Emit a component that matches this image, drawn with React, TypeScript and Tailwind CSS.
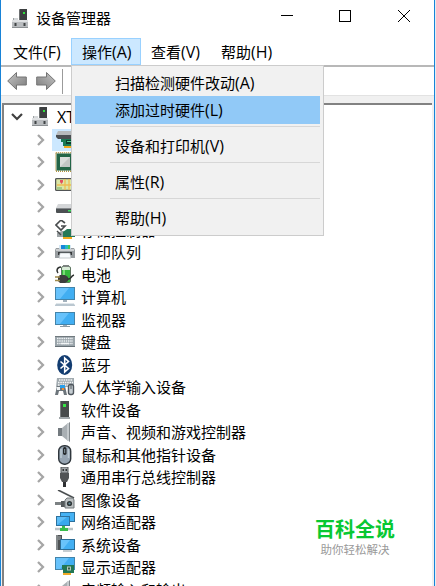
import React from "react";

const Chevron = () => (
  <svg width="10" height="14" viewBox="0 0 10 14" fill="none" stroke="#a6a6a6" strokeWidth="2.3">
    <path d="M2 2l5 5-5 5" />
  </svg>
);

const ComputerTower = () => (
  <svg width="20" height="20" viewBox="0 0 20 20">
    <path d="M8 1l1-1h7v12H8z" fill="#3c3f40" />
    <path d="M8 1l1-1v12H8z" fill="#6d7071" />
    <rect x="12" y="3" width="2" height="2" fill="#2fe23c" />
    <path d="M2 9h5v3H2z" fill="#d5d8da" />
    <path d="M2 9h1v3H2z" fill="#9da1a3" />
    <path d="M1 11h16v8H1z" fill="#b9bcbf" />
    <path d="M1 11h16v2H1z" fill="#dfe1e3" />
    <path d="M3.500 14h2v3h-2zM12.500 14h2v3h-2z" fill="#404446" />
    <path d="M1 18h16v1H1z" fill="#8c9093" />
  </svg>
);

const DiskController = () => (
  <svg width="20" height="20" viewBox="0 0 20 20">
    <path d="M3 1h17v4H1z" fill="#b7babc" />
    <path d="M1 5h19v4H3L1 7z" fill="#4b4f52" />
    <path d="M6 9h14v7H8v-4H6z" fill="#197a55" />
    <path d="M11 10h6v4h-6z" fill="#0b3d2b" />
    <path d="M12 11h4v1h-4z" fill="#54ce93" />
    <path d="M9 16h10v2H9z" fill="#f2a91c" />
  </svg>
);

const Processor = () => (
  <svg width="20" height="20" viewBox="0 0 20 20">
    <rect x="0.800" y="0.800" width="18.400" height="18.400" fill="none" stroke="#b39441" strokeWidth="1.400" strokeDasharray="1 1" />
    <rect x="1.500" y="1.500" width="17" height="17" fill="#236547" />
    <rect x="5" y="5" width="10" height="10" fill="#d9dcdb" />
    <path d="M15 5v10H5z" fill="#c1c6c4" />
  </svg>
);

const MapDevice = () => (
  <svg width="20" height="20" viewBox="0 0 20 20">
    <rect x="0.600" y="3.600" width="18.800" height="11.800" rx="1" fill="#dce7a5" stroke="#515455" strokeWidth="1.300" />
    <path d="M2 10h16M10 4v11M14 4v11" stroke="#eebc53" strokeWidth="1.300" />
    <path d="M2 12h5v3H2z" fill="#a5c98a" />
    <path d="M5 5h3v2L6.500 9 5 7z" fill="#e34f5f" />
  </svg>
);

const DiskDrive = () => (
  <svg width="20" height="20" viewBox="0 0 20 20">
    <path d="M3 7h14l2 4H1z" fill="#d4d6d8" />
    <rect x="1" y="11" width="18" height="5" rx="1" fill="#4c5053" />
    <path d="M1 11h18v1H1z" fill="#85898c" />
    <rect x="13" y="13" width="3" height="1.500" fill="#3bdf5c" />
  </svg>
);

const StorageController = () => (
  <svg width="20" height="20" viewBox="0 0 20 20">
    <path d="M2 13l5-2h13v6H2z" fill="#9ea4a6" />
    <path d="M8 12l4-3h8v8H8z" fill="#277958" />
    <path d="M8 17h9v2H8z" fill="#f2a91c" />
    <path d="M10 3L6 0 1 5l5 5 4-4H6" fill="#fff" stroke="#484b4d" strokeWidth="1.600" />
    <path d="M2 11l4 4" stroke="#484b4d" strokeWidth="1.500" />
  </svg>
);

const Printer = () => (
  <svg width="20" height="20" viewBox="0 0 20 20">
    <path d="M4 3h12v5H4z" fill="#d5e7f3" />
    <path d="M6 3h8v4H6z" fill="#1686db" />
    <path d="M10 3h3v4h-3z" fill="#25bbc0" />
    <path d="M13 3h2v4h-2z" fill="#47c751" />
    <path d="M1 6h3l1 2h10l1-2h3l1 2v8H0V8z" fill="#979c9f" />
    <path d="M1 7h18v2H1z" fill="#cbced0" />
    <path d="M3 10h14v3H3z" fill="#36393b" />
    <path d="M5 11h10l1 5H4z" fill="#f8fbfd" stroke="#a0a7ad" strokeWidth=".6" />
  </svg>
);

const Battery = () => (
  <svg width="20" height="20" viewBox="0 0 20 20">
    <rect x="6.500" y="1.500" width="9" height="16" rx="1.500" fill="#d8ecd7" stroke="#5e7661" />
    <path d="M7 5h8v12H7z" fill="#35b83c" />
    <path d="M8 5h2v11H8z" fill="#7bdc77" />
    <path d="M8 0h6v2H8z" fill="#7d8380" />
    <path d="M5 10h5l3 2v4l-3 2H5l-2-2v-4z" fill="#3d3e3d" />
    <path d="M0 12h5M0 15.500h5" stroke="#a08b4b" strokeWidth="1.600" />
    <path d="M12 14c5 1 3-3 7-4M6 2C2 2 1 6 3 8" fill="none" stroke="#303331" strokeWidth="1.600" />
  </svg>
);

const Screen = () => (
  <>
    <rect x="0.500" y="1.500" width="19" height="12" fill="#41aef2" stroke="#4384aa" />
    <path d="M1 2h13L5 13H1z" fill="#67c2fb" />
  </>
);

const Computer = () => (
  <svg width="20" height="20" viewBox="0 0 20 20">
    <g transform="translate(0 -1)"><Screen /></g>
    <path d="M8 13h4v2H8z" fill="#a4b2bd" />
    <path d="M2 16h16l2 2v1H0v-1z" fill="#bac7d0" />
    <path d="M2 16h16l1 1H1z" fill="#e0e7eb" />
  </svg>
);

const Monitor = () => (
  <svg width="20" height="20" viewBox="0 0 20 20">
    <g transform="translate(0 1)"><Screen /></g>
    <path d="M8 15h4v1H8z" fill="#9dadb8" />
    <path d="M5 16h10v1H5z" fill="#8d9ba3" />
  </svg>
);

const Keyboard = () => (
  <svg width="20" height="20" viewBox="0 0 20 20">
    <rect y="4" width="20" height="11" fill="#9aa4aa" />
    <path d="M0 4h20v1H0z" fill="#70797e" />
    <path d="M2 6.500h16M2 9h16M2 11.500h16" stroke="#eff3f5" strokeWidth="1.500" strokeDasharray="1.500 .7" />
    <path d="M6 11.500h8" stroke="#f2f5f6" strokeWidth="1.500" />
    <path d="M0 14h20v1H0z" fill="#677177" />
  </svg>
);

const Bluetooth = () => (
  <svg width="20" height="20" viewBox="0 0 20 20">
    <ellipse cx="9.700" cy="10" rx="7.500" ry="10" fill="#123c70" />
    <path d="M5.500 6.500l8 7L9.700 17V3l3.800 3.500-8 7" fill="none" stroke="#fff" strokeWidth="1.600" />
  </svg>
);

const HumanInput = () => (
  <svg width="20" height="20" viewBox="0 0 20 20">
    <path d="M2 1h17v9H1z" fill="#a1aaaf" />
    <path d="M4 3h14M3 5.500h15M3 8h15" stroke="#f4f6f7" strokeWidth="1.300" strokeDasharray="1.500 .8" />
    <path d="M2 9h8l2 9H9l-1-4H4l-1 4H0z" fill="#6d757b" />
    <path d="M5 8h5v3H5z" fill="#299ee9" />
    <rect x="2" y="10" width="3" height="3" fill="#eff3f5" />
    <rect x="7" y="11" width="2" height="2" fill="#ef8b32" />
    <rect x="13.500" y="7.500" width="5" height="10" rx="2" fill="#c5cdd2" stroke="#4f565d" strokeWidth="1.400" />
    <path d="M16 8v4" stroke="#4f565d" />
  </svg>
);

const SoftwareDevice = () => (
  <svg width="20" height="20" viewBox="0 0 20 20">
    <path d="M5 1h9v16H5z" fill="#474a4b" />
    <path d="M5 1h1v16H5z" fill="#787c7e" />
    <rect x="8" y="4" width="3" height="3" fill="#36e545" />
    <path d="M4 17h11v2H4z" fill="#a1a7aa" />
  </svg>
);

const Speaker = () => (
  <svg width="20" height="20" viewBox="0 0 20 20">
    <path d="M3 6h4v8H3z" fill="#737a7f" />
    <path d="M7 6l6-5v18l-6-5z" fill="#a9afb3" />
    <path d="M12 2l3-2v20l-3-2z" fill="#c5cacd" />
    <path d="M14 1l1-1v20l-1-1z" fill="#83898d" />
  </svg>
);

const Mouse = () => (
  <svg width="20" height="20" viewBox="0 0 20 20">
    <rect x="3.700" y="0.700" width="12" height="18.500" rx="5.500" fill="#97a5b3" stroke="#30373d" strokeWidth="1.400" />
    <path d="M6 4v9M13.500 4v9" stroke="#bdcad4" strokeWidth="1.500" />
    <rect x="8" y="2" width="3.500" height="8" rx="1.700" fill="#25292c" />
    <path d="M9.700 4v4" stroke="#8b9aa6" />
  </svg>
);

const Usb = () => (
  <svg width="20" height="20" viewBox="0 0 20 20">
    <path d="M6 0h7v6H6z" fill="#a0a4a7" stroke="#525659" />
    <path d="M7.500 2h1.500v2H7.500zM10.500 2H12v2h-1.500z" fill="#303335" />
    <path d="M5 6h9v5l-2 4H7l-2-4z" fill="#515355" />
    <path d="M8 15h3v5H8z" fill="#2f3133" />
  </svg>
);

const Imaging = () => (
  <svg width="20" height="20" viewBox="0 0 20 20">
    <path d="M3 0l16 8" stroke="#4c5052" strokeWidth="1.700" />
    <path d="M0 12h8v3H0z" fill="#7c8183" />
    <path d="M6 11h4v6H6z" fill="#54595b" />
    <path d="M10 10l2-2h6l1 2v8h-9z" fill="#bbc0c2" stroke="#73797b" />
    <circle cx="14.500" cy="13.500" r="2.600" fill="#303638" />
    <circle cx="14.500" cy="13.500" r="1.100" fill="#628b98" />
  </svg>
);

const Network = () => (
  <svg width="20" height="20" viewBox="0 0 20 20">
    <rect x="5.500" y="0.500" width="14" height="9" fill="#45b2f4" stroke="#2d719d" />
    <rect x="1.500" y="4.500" width="13" height="9" fill="#5cbdf7" stroke="#2d719d" />
    <path d="M2 13L12 5h2v8z" fill="#39a8ed" />
    <path d="M0 17h18" stroke="#bcc4c7" strokeWidth="2.500" />
    <path d="M7 14h3v2h3v3H5v-3h2z" fill="#39bd4c" />
  </svg>
);

const SystemDevice = () => (
  <svg width="20" height="20" viewBox="0 0 20 20">
    <path d="M1 0h6v15H1z" fill="#4e5254" />
    <path d="M1 0h2v15H1z" fill="#83888a" />
    <path d="M3 2h3M3 4h3" stroke="#a9afb1" />
    <rect x="5.500" y="4.500" width="14" height="10" fill="#43aff2" stroke="#2c6d96" />
    <path d="M6 5h9l-7 9H6z" fill="#69c3fa" />
    <path d="M8 16h9" stroke="#8d9da6" />
  </svg>
);

const DisplayAdapter = () => (
  <svg width="20" height="20" viewBox="0 0 20 20">
    <g transform="translate(0 -1)"><Screen /></g>
    <path d="M7 8h12v8H8v-4H7z" fill="#227754" />
    <path d="M12 9.500h4v4h-4z" fill="#b7cabe" />
    <path d="M13 10.500h2v2h-2z" fill="#335c46" />
    <path d="M8 16h8v2H8z" fill="#f0aa27" />
  </svg>
);

const devices = [
  { icon: DiskController, label: "", selected: true },
  { icon: Processor, label: "" },
  { icon: MapDevice, label: "" },
  { icon: DiskDrive, label: "" },
  { icon: StorageController, label: "存储控制器" },
  { icon: Printer, label: "打印队列" },
  { icon: Battery, label: "电池" },
  { icon: Computer, label: "计算机" },
  { icon: Monitor, label: "监视器" },
  { icon: Keyboard, label: "键盘" },
  { icon: Bluetooth, label: "蓝牙" },
  { icon: HumanInput, label: "人体学输入设备" },
  { icon: SoftwareDevice, label: "软件设备" },
  { icon: Speaker, label: "声音、视频和游戏控制器" },
  { icon: Mouse, label: "鼠标和其他指针设备" },
  { icon: Usb, label: "通用串行总线控制器" },
  { icon: Imaging, label: "图像设备" },
  { icon: Network, label: "网络适配器" },
  { icon: SystemDevice, label: "系统设备" },
  { icon: DisplayAdapter, label: "显示适配器" },
  { icon: Speaker, label: "音频输入和输出" },
];

const TitleBar = () => (
  <div className="flex h-[38px] shrink-0 items-center pl-[10px]">
    <ComputerTower />
    <h1 className="mb-[2px] ml-[5px] flex-1">设备管理器</h1>
    <svg className="mb-[6px] mr-[21px]" width="134" height="14" viewBox="0 0 134 14" fill="none" stroke="#000" strokeWidth="1">
      <path d="M2 6.500h12" />
      <rect x="60.500" y="1.500" width="11" height="11" />
      <path d="M119 1l12 12M131 1l-12 12" />
    </svg>
  </div>
);

const MenuLabel = ({ text, hotkey }: { text: string; hotkey: string }) => (
  <span className="whitespace-nowrap">
    {text}
    <span className="text-[16px]">({hotkey})</span>
  </span>
);

const MenuDivider = () => <div className="ml-[35px] mt-[3px] h-px bg-[#d7d7d7]" />;

const ActionMenu = () => (
  <div className="absolute left-[70px] top-[27px] z-10 h-[171px] w-[253px] border border-[#ccc] bg-[#f1f1f1] px-[3px] pt-[3px]">
    <div className="flex h-[27px] items-center pl-[40px]">
      <MenuLabel text="扫描检测硬件改动" hotkey="A" />
    </div>
    <div className="-mb-px flex h-7 items-center bg-[#91c9f7] pl-[40px]">
      <MenuLabel text="添加过时硬件" hotkey="L" />
    </div>
    <MenuDivider />
    <div className="mt-[5px] flex h-[27px] items-center pl-[40px]">
      <MenuLabel text="设备和打印机" hotkey="V" />
    </div>
    <MenuDivider />
    <div className="mt-[5px] flex h-[27px] items-center pl-[40px]">
      <MenuLabel text="属性" hotkey="R" />
    </div>
    <MenuDivider />
    <div className="mt-[5px] flex h-[27px] items-center pl-[40px]">
      <MenuLabel text="帮助" hotkey="H" />
    </div>
  </div>
);

const MenuBar = () => (
  <div className="relative flex h-[27px] shrink-0">
    <span className="flex w-[70px] items-center pl-[12px]">
      <MenuLabel text="文件" hotkey="F" />
    </span>
    <span className="flex w-[70px] items-center border border-[#99d1ff] bg-[#cce8ff] pl-[10px]">
      <MenuLabel text="操作" hotkey="A" />
    </span>
    <span className="flex w-[70px] items-center pl-[10px]">
      <MenuLabel text="查看" hotkey="V" />
    </span>
    <span className="flex w-[70px] items-center pl-[10px]">
      <MenuLabel text="帮助" hotkey="H" />
    </span>
    <ActionMenu />
  </div>
);

const ArrowIcon = ({ className = "" }: { className?: string }) => (
  <svg className={className} width="20" height="20" viewBox="0 0 20 20">
    <defs>
      <linearGradient id="arrow" x1="0" y1="0" x2="1" y2="1">
        <stop offset="0" stopColor="#c4c4c4" />
        <stop offset="1" stopColor="#7c7c7c" />
      </linearGradient>
    </defs>
    <path d="M.700 10L9.500 1.500V6h9.800v8H9.500v4.500z" fill="url(#arrow)" stroke="#757575" />
  </svg>
);

const Toolbar = () => (
  <div className="flex h-[30px] shrink-0 items-center border-t-2 border-[#b8b8b8] pl-[6px]">
    <ArrowIcon />
    <ArrowIcon className="ml-[9px] -scale-x-100" />
    <div className="ml-[6px] h-[25px] w-px bg-[#9b9b9b]" />
  </div>
);

const DeviceTree = () => (
  <div className="min-h-0 flex-1 overflow-hidden border-l-2 border-t-2 border-[#828282] bg-white">
    <div className="mt-[1px] flex h-[22.500px] items-center pl-[7px]">
      <svg width="12" height="8" viewBox="0 0 12 8" fill="none" stroke="#404040" strokeWidth="2.200">
        <path d="M1 1l5 5 5-5" />
      </svg>
      <div className="ml-[8px]"><ComputerTower /></div>
      <span className="ml-[6px] text-[16px]">XT</span>
    </div>
    {devices.map((device, index) => (
      <div key={index} className="flex h-[22.500px] items-center pl-[32px]">
        <Chevron />
        <div className={device.selected ? "ml-[6px] flex h-[22px] w-[200px] items-center bg-[#cce8ff] pl-[3px]" : "ml-[6px] flex items-center pl-[3px]"}>
          <device.icon />
          <span className="ml-[6px] whitespace-nowrap">{device.label}</span>
        </div>
      </div>
    ))}
  </div>
);

const App = () => {
  return (
    <div className="relative flex h-[586px] w-[436px] overflow-hidden bg-white font-['Open_Sans','Noto_Sans_CJK_SC',sans-serif] text-[15px] leading-[22px] text-black">
      <div className="flex w-[435px] flex-col border-l border-r border-[#1883d7]">
        <TitleBar />
        <MenuBar />
        <Toolbar />
        <div className="h-2 shrink-0 border-t border-[#e2e2e2] bg-[#f0f0f0]" />
        <div className="flex min-h-0 flex-1 bg-[#f0f0f0] pl-px pr-[2px]">
          <DeviceTree />
        </div>
      </div>
      <div className="w-px bg-[#e3edf3]" />

      {/* Watermark */}
      <div className="absolute left-[314px] top-[517px] w-[82px] text-center">
        <div className="whitespace-nowrap text-[20px] font-bold leading-[26px] text-[#08c832]">百科全说</div>
        <div className="whitespace-nowrap text-[11.500px] leading-[13px] text-[#999]">助你轻松解决</div>
      </div>
    </div>
  );
};

export default App;
